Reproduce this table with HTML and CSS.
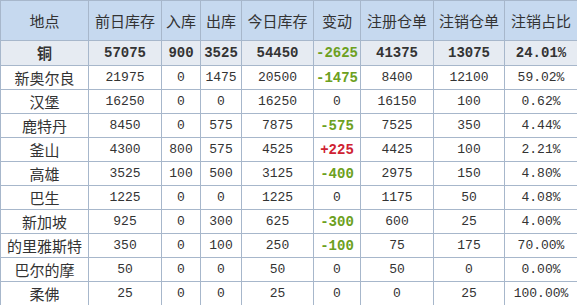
FILE: index.html
```html
<!DOCTYPE html>
<html lang="zh-CN">
  <head>
    <meta charset="UTF-8">
    <title>铜库存</title>
    <link rel="stylesheet" href="styles.css">
  </head>
  <body>
    <table class="stock">
      <colgroup>
        <col class="c1"><col class="c2"><col class="c3"><col class="c4"><col class="c5">
        <col class="c6"><col class="c7"><col class="c8"><col class="c9">
      </colgroup>
      <tr class="head">
        <th>地点</th><th>前日库存</th><th>入库</th><th>出库</th><th>今日库存</th>
        <th>变动</th><th>注册仓单</th><th>注销仓单</th><th>注销占比</th>
      </tr>
      <tr class="total">
        <td class="name">铜</td><td>57075</td><td>900</td><td>3525</td><td>54450</td>
        <td class="down">-2625</td><td>41375</td><td>13075</td><td>24.01%</td>
      </tr>
      <tr>
        <td class="name">新奥尔良</td><td>21975</td><td>0</td><td>1475</td><td>20500</td>
        <td class="down">-1475</td><td>8400</td><td>12100</td><td>59.02%</td>
      </tr>
      <tr>
        <td class="name">汉堡</td><td>16250</td><td>0</td><td>0</td><td>16250</td>
        <td>0</td><td>16150</td><td>100</td><td>0.62%</td>
      </tr>
      <tr>
        <td class="name">鹿特丹</td><td>8450</td><td>0</td><td>575</td><td>7875</td>
        <td class="down">-575</td><td>7525</td><td>350</td><td>4.44%</td>
      </tr>
      <tr>
        <td class="name">釜山</td><td>4300</td><td>800</td><td>575</td><td>4525</td>
        <td class="up">+225</td><td>4425</td><td>100</td><td>2.21%</td>
      </tr>
      <tr>
        <td class="name">高雄</td><td>3525</td><td>100</td><td>500</td><td>3125</td>
        <td class="down">-400</td><td>2975</td><td>150</td><td>4.80%</td>
      </tr>
      <tr>
        <td class="name">巴生</td><td>1225</td><td>0</td><td>0</td><td>1225</td>
        <td>0</td><td>1175</td><td>50</td><td>4.08%</td>
      </tr>
      <tr>
        <td class="name">新加坡</td><td>925</td><td>0</td><td>300</td><td>625</td>
        <td class="down">-300</td><td>600</td><td>25</td><td>4.00%</td>
      </tr>
      <tr>
        <td class="name">的里雅斯特</td><td>350</td><td>0</td><td>100</td><td>250</td>
        <td class="down">-100</td><td>75</td><td>175</td><td>70.00%</td>
      </tr>
      <tr>
        <td class="name">巴尔的摩</td><td>50</td><td>0</td><td>0</td><td>50</td>
        <td>0</td><td>50</td><td>0</td><td>0.00%</td>
      </tr>
      <tr>
        <td class="name">柔佛</td><td>25</td><td>0</td><td>0</td><td>25</td>
        <td>0</td><td>0</td><td>25</td><td>100.00%</td>
      </tr>
    </table>
  </body>
</html>
```

FILE: styles.css
```css
*{
    margin: 0;
    padding: 0;
    box-sizing: border-box;
}
body{
    background-color: white;
}
.stock{
    border-collapse: collapse;
    table-layout: fixed;
    width: 577px;
    color: #333;
    font-family: "Liberation Mono", "Noto Sans CJK SC", monospace;
    font-size: 13px;
}
.c1{ width: 88px; }
.c2{ width: 73px; }
.c3{ width: 39px; }
.c4{ width: 41px; }
.c5{ width: 72px; }
.c6{ width: 47px; }
.c7{ width: 73px; }
.c8{ width: 71px; }
.c9{ width: 73px; }
.stock th,
.stock td{
    border: 1px solid #a7b7cb;
    text-align: center;
    white-space: nowrap;
    height: 24px;
    line-height: 18px;
}
.stock th{
    height: 40px;
    background-color: #c6d9ef;
    font-family: "Noto Sans CJK SC", sans-serif;
    font-weight: normal;
    font-size: 15px;
}
.stock td.name{
    font-family: "Noto Sans CJK SC", sans-serif;
    font-size: 15px;
}
.total td{
    height: 25px;
    background-color: #e6ebf2;
    font-weight: bold;
    font-size: 14px;
}
.stock .total td.name{
    font-weight: bold;
}
.down{
    color: #6ca020;
    font-weight: bold;
    font-size: 14px;
}
.up{
    color: #cf2232;
    font-weight: bold;
    font-size: 14px;
}
```
